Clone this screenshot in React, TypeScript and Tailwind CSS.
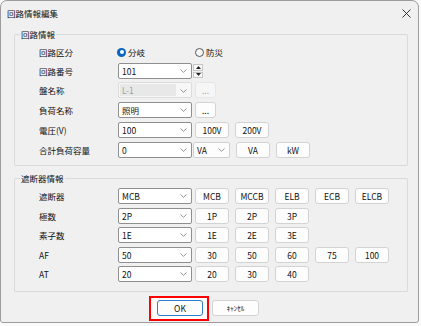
import React from "react";

const font = { fontFamily: '"Noto Sans CJK JP", "Noto Sans", sans-serif' };

function Chevron() {
  return (
    <svg width="7" height="4" viewBox="0 0 7 4" className="shrink-0">
      <path d="M0.5 0.5 L3.5 3.3 L6.5 0.5" fill="none" stroke="#8a8a8a" strokeWidth="0.9" />
    </svg>
  );
}

function Combo({ value, disabled }: { value: string; disabled?: boolean }) {
  if (disabled) {
    return (
      <div className="w-[74px] h-[16px] shrink-0 border border-[#dcdcdc] rounded-[2px] bg-[#f7f7f7] flex items-center">
        <div className="h-[12px] w-[56px] ml-[1px] bg-[#e8e8e8] flex items-center pl-[2px] text-[#a0a0a0]">{value}</div>
        <div className="flex-1 flex justify-center pt-[1px]">
          <Chevron />
        </div>
      </div>
    );
  }
  return (
    <div className="w-[74px] h-[16px] shrink-0 border border-[#8f8f8f] rounded-[2px] bg-white flex items-center pl-[3px] pr-[4px] justify-between">
      <span>{value}</span>
      <Chevron />
    </div>
  );
}

function Btn({ children, w = "w-[34px]", disabled }: { children: React.ReactNode; w?: string; disabled?: boolean }) {
  return (
    <div
      className={`${w} h-[16px] shrink-0 rounded-[3px] border flex items-center justify-center ${
        disabled ? "border-[#e6e6e6] bg-[#f6f6f6] text-[#a8a8a8]" : "border-[#d3d3d3] bg-[#fdfdfd] text-[#111]"
      }`}
    >
      {children}
    </div>
  );
}

function Row({ label, mt, children }: { label: string; mt: string; children?: React.ReactNode }) {
  return (
    <div className={`flex items-center h-[16px] pl-[24px] ${mt}`}>
      <div className="w-[79px] shrink-0 text-[#111]">{label}</div>
      {children}
    </div>
  );
}

function Radio({ checked, label }: { checked?: boolean; label: string }) {
  return (
    <div className="flex items-center gap-[2px]">
      {checked ? (
        <div className="w-[9px] h-[9px] rounded-full bg-[#0a64c2] flex items-center justify-center">
          <div className="w-[4px] h-[4px] rounded-full bg-white" />
        </div>
      ) : (
        <div className="w-[9px] h-[9px] rounded-full border border-[#555] bg-[#f7f7f7]" />
      )}
      <span className="text-[#111]">{label}</span>
    </div>
  );
}

function Spinner() {
  return (
    <div className="ml-[1px] w-[10px] h-[14px] flex flex-col gap-[1px] shrink-0">
      <div className="h-[6.5px] border border-[#c4c4c4] bg-[#f9f9f9] flex items-center justify-center">
        <svg width="5" height="3" viewBox="0 0 5 3">
          <path d="M0 3 L2.5 0 L5 3 Z" fill="#222" />
        </svg>
      </div>
      <div className="h-[6.5px] border border-[#c4c4c4] bg-[#f9f9f9] flex items-center justify-center">
        <svg width="5" height="3" viewBox="0 0 5 3">
          <path d="M0 0 L2.5 3 L5 0 Z" fill="#222" />
        </svg>
      </div>
    </div>
  );
}

function Buttons({ items }: { items: string[] }) {
  return (
    <div className="flex gap-[6px] ml-[3px]">
      {items.map((t) => (
        <Btn key={t}>{t}</Btn>
      ))}
    </div>
  );
}

export default function App() {
  return (
    <div className="w-[421px] h-[326px] bg-[#fafafa] text-[8.5px] leading-none text-[#111]" style={font}>
      <div className="w-[419px] h-[323px] border border-[#9c9c9c] rounded-t-[7px] rounded-b-[3px] bg-[#f0f0f0] flex flex-col">
        {/* title bar */}
        <div className="h-[24px] flex items-center justify-between pl-[6px] pr-[6px] shrink-0">
          <span>回路情報編集</span>
          <svg width="9" height="9" viewBox="0 0 9 9" className="mr-[1px]">
            <path d="M0.5 0.5 L8.5 8.5 M8.5 0.5 L0.5 8.5" stroke="#333" strokeWidth="1" />
          </svg>
        </div>

        {/* group 1 */}
        <div className="relative ml-[13px] mt-[9px] w-[394px] h-[132px] border border-[#dadada] rounded-[1px] pt-[9px] shrink-0">
          <div className="absolute left-[5px] -top-[5px] px-[1px] bg-[#f0f0f0]">回路情報</div>
          <Row label="回路区分" mt="mt-0">
            <div className="-ml-[1px]">
              <Radio checked label="分岐" />
            </div>
            <div className="ml-[50px]">
              <Radio label="防災" />
            </div>
          </Row>
          <Row label="回路番号" mt="mt-[3px]">
            <Combo value="101" />
            <Spinner />
          </Row>
          <Row label="盤名称" mt="mt-[3px]">
            <Combo value="L-1" disabled />
            <div className="ml-[3px]">
              <Btn w="w-[21px]" disabled>...</Btn>
            </div>
          </Row>
          <Row label="負荷名称" mt="mt-[4px]">
            <Combo value="照明" />
            <div className="ml-[3px]">
              <Btn w="w-[21px]">...</Btn>
            </div>
          </Row>
          <Row label="電圧(V)" mt="mt-[4px]">
            <Combo value="100" />
            <Buttons items={["100V", "200V"]} />
          </Row>
          <Row label="合計負荷容量" mt="mt-[4px]">
            <Combo value="0" />
            <div className="ml-[1px] w-[37px] h-[16px] border border-[#d0d0d0] rounded-[2px] bg-[#fdfdfd] flex items-center justify-between pl-[3px] pr-[4px]">
              <span>VA</span>
              <Chevron />
            </div>
            <div className="flex gap-[6px] ml-[6px]">
              <Btn>VA</Btn>
              <Btn>kW</Btn>
            </div>
          </Row>
        </div>

        {/* group 2 */}
        <div className="relative ml-[13px] mt-[12px] w-[394px] h-[114px] border border-[#dadada] rounded-[1px] pt-[9px] shrink-0">
          <div className="absolute left-[5px] -top-[5px] px-[1px] bg-[#f0f0f0]">遮断器情報</div>
          <Row label="遮断器" mt="mt-0">
            <Combo value="MCB" />
            <Buttons items={["MCB", "MCCB", "ELB", "ECB", "ELCB"]} />
          </Row>
          <Row label="極数" mt="mt-[4px]">
            <Combo value="2P" />
            <Buttons items={["1P", "2P", "3P"]} />
          </Row>
          <Row label="素子数" mt="mt-[3px]">
            <Combo value="1E" />
            <Buttons items={["1E", "2E", "3E"]} />
          </Row>
          <Row label="AF" mt="mt-[4px]">
            <Combo value="50" />
            <Buttons items={["30", "50", "60", "75", "100"]} />
          </Row>
          <Row label="AT" mt="mt-[3px]">
            <Combo value="20" />
            <Buttons items={["20", "30", "40"]} />
          </Row>
        </div>

        {/* buttons */}
        <div className="flex items-start mt-[4px] pl-[148px]">
          <div className="w-[60px] h-[25px] border-2 border-[#ff0000] bg-white flex items-start pt-[2px] pl-[6px]">
            <div className="w-[46px] h-[16px] rounded-[3px] border border-[#2d7fd0] bg-[#fdfdfd] flex items-center justify-center">
              OK
            </div>
          </div>
          <div className="ml-[3px] mt-[4px] w-[47px] h-[16px] rounded-[3px] border border-[#d3d3d3] bg-[#fdfdfd] flex items-center justify-center text-[7px]">
            ｷｬﾝｾﾙ
          </div>
        </div>
      </div>
    </div>
  );
}
